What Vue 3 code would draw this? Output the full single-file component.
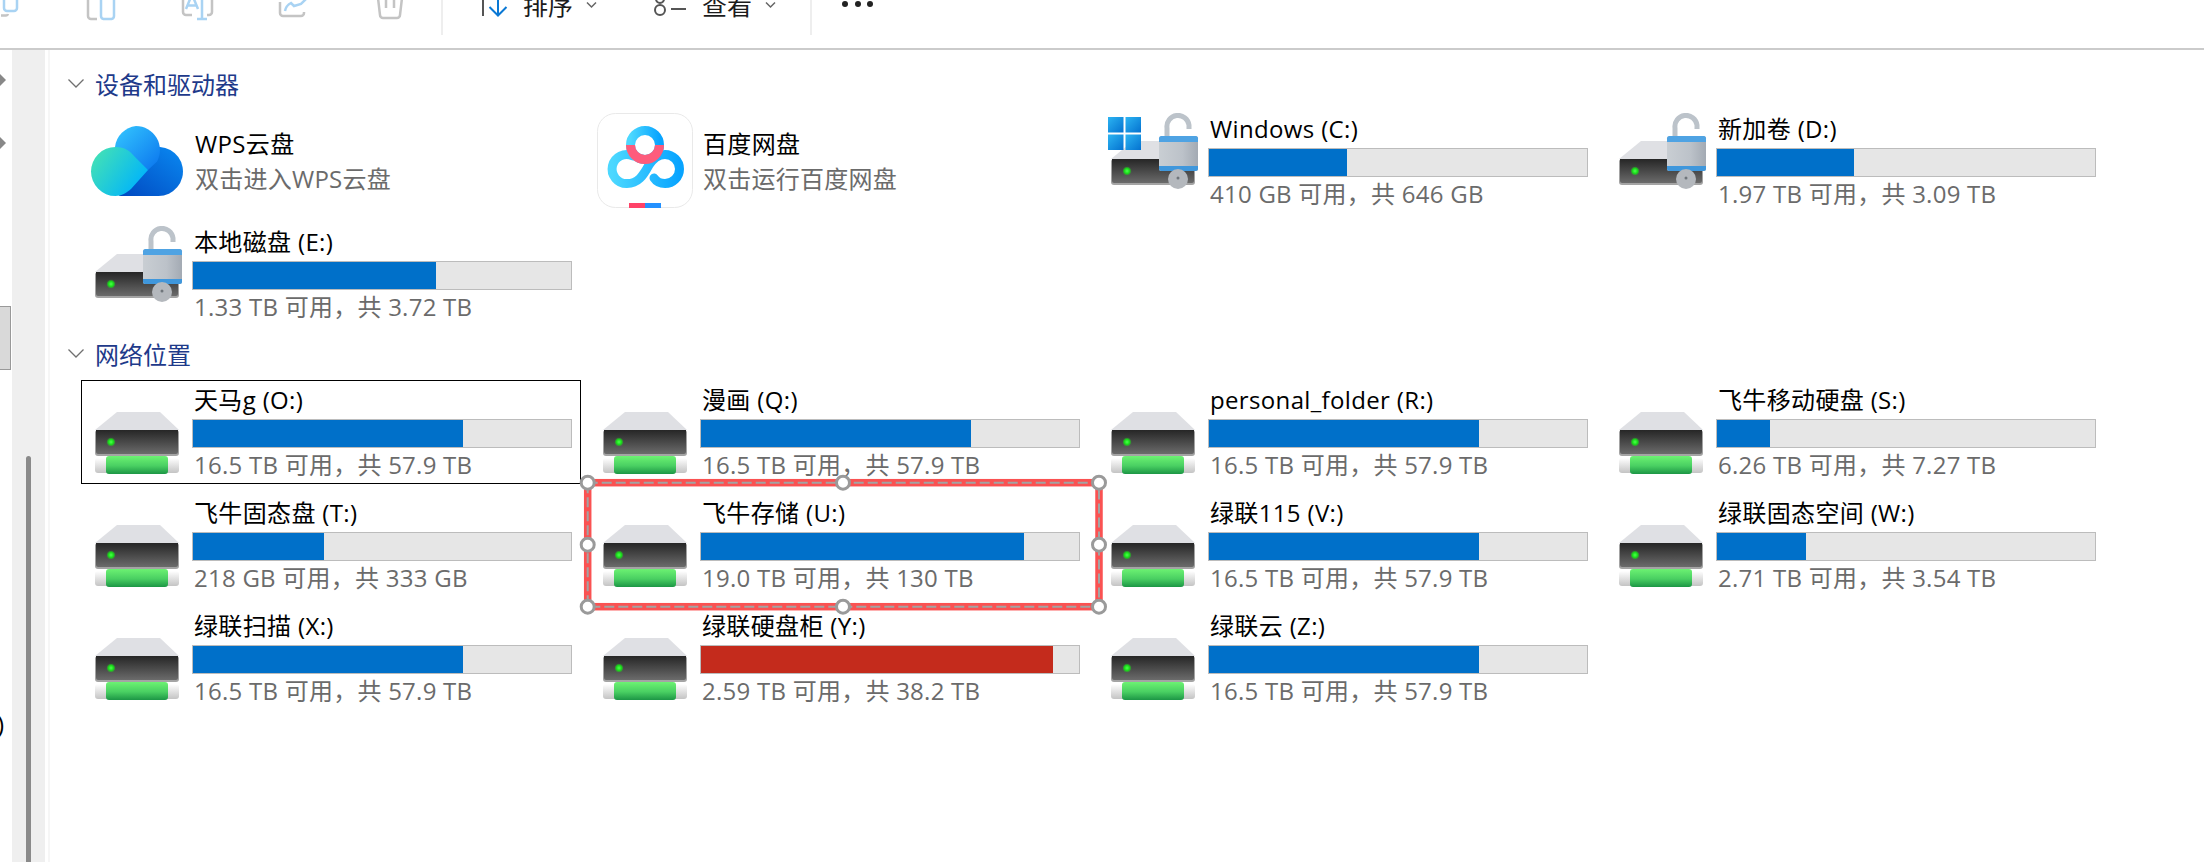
<script setup>
const pct = (free, total) => `${(1 - free / total) * 100}%`

const apps = [
  { name: 'WPS云盘', hint: '双击进入WPS云盘', icon: 'wps' },
  { name: '百度网盘', hint: '双击运行百度网盘', icon: 'baidu' },
]

const localDrives = [
  { name: 'Windows (C:)', usage: '410 GB 可用，共 646 GB', fill: pct(410, 646), win: true },
  { name: '新加卷 (D:)', usage: '1.97 TB 可用，共 3.09 TB', fill: pct(1.97, 3.09) },
  { name: '本地磁盘 (E:)', usage: '1.33 TB 可用，共 3.72 TB', fill: pct(1.33, 3.72) },
]

const netDrives = [
  { name: '天马g (O:)', usage: '16.5 TB 可用，共 57.9 TB', fill: pct(16.5, 57.9), selected: true },
  { name: '漫画 (Q:)', usage: '16.5 TB 可用，共 57.9 TB', fill: pct(16.5, 57.9) },
  { name: 'personal_folder (R:)', usage: '16.5 TB 可用，共 57.9 TB', fill: pct(16.5, 57.9) },
  { name: '飞牛移动硬盘 (S:)', usage: '6.26 TB 可用，共 7.27 TB', fill: pct(6.26, 7.27) },
  { name: '飞牛固态盘 (T:)', usage: '218 GB 可用，共 333 GB', fill: pct(218, 333) },
  { name: '飞牛存储 (U:)', usage: '19.0 TB 可用，共 130 TB', fill: pct(19, 130), marked: true },
  { name: '绿联115 (V:)', usage: '16.5 TB 可用，共 57.9 TB', fill: pct(16.5, 57.9) },
  { name: '绿联固态空间 (W:)', usage: '2.71 TB 可用，共 3.54 TB', fill: pct(2.71, 3.54) },
  { name: '绿联扫描 (X:)', usage: '16.5 TB 可用，共 57.9 TB', fill: pct(16.5, 57.9) },
  { name: '绿联硬盘柜 (Y:)', usage: '2.59 TB 可用，共 38.2 TB', fill: pct(2.59, 38.2), low: true },
  { name: '绿联云 (Z:)', usage: '16.5 TB 可用，共 57.9 TB', fill: pct(16.5, 57.9) },
]

const handles = [
  [10.7, 10.7], [266, 10.7], [522, 10.7],
  [10.7, 72.7], [522, 72.7],
  [10.7, 134.7], [266, 134.7], [522, 134.7],
]
</script>

<template>
  <div class="explorer">
    <svg class="sprites" width="0" height="0" aria-hidden="true">
      <defs>
        <linearGradient id="g-box" x1="0" y1="0" x2="0" y2="1">
          <stop offset="0" stop-color="#262626" />
          <stop offset="1" stop-color="#6b6b6b" />
        </linearGradient>
        <linearGradient id="g-plug" x1="0" y1="0" x2="0" y2="1">
          <stop offset="0" stop-color="#ffffff" />
          <stop offset="1" stop-color="#c4c4c4" />
        </linearGradient>
        <linearGradient id="g-cable" x1="0" y1="0" x2="0" y2="1">
          <stop offset="0" stop-color="#6cf272" />
          <stop offset="0.55" stop-color="#49cf62" />
          <stop offset="1" stop-color="#1c9645" />
        </linearGradient>
        <linearGradient id="g-lock" x1="0" y1="0" x2="1" y2="0">
          <stop offset="0" stop-color="#c9ced3" />
          <stop offset="0.6" stop-color="#bcc2c9" />
          <stop offset="1" stop-color="#a3aab3" />
        </linearGradient>
        <linearGradient id="g-win" x1="0" y1="0" x2="1" y2="1">
          <stop offset="0" stop-color="#2cb4f2" />
          <stop offset="1" stop-color="#0472d0" />
        </linearGradient>
        <linearGradient id="g-wps-top" x1="0" y1="0" x2="1" y2="1">
          <stop offset="0" stop-color="#35c8ff" />
          <stop offset="1" stop-color="#0a74ee" />
        </linearGradient>
        <linearGradient id="g-wps-back" x1="0" y1="1" x2="1" y2="0">
          <stop offset="0" stop-color="#0048c0" />
          <stop offset="1" stop-color="#0a8af2" />
        </linearGradient>
        <linearGradient id="g-wps-front" x1="0" y1="0" x2="1" y2="0.6">
          <stop offset="0" stop-color="#4ae6ae" />
          <stop offset="1" stop-color="#00b4fb" />
        </linearGradient>
        <linearGradient id="g-bd" x1="0" y1="0" x2="1" y2="0">
          <stop offset="0" stop-color="#4cd8ff" />
          <stop offset="1" stop-color="#08a4ff" />
        </linearGradient>
        <radialGradient id="g-led">
          <stop offset="0" stop-color="#4dff4d" />
          <stop offset="0.55" stop-color="#19e019" />
          <stop offset="1" stop-color="#19e019" stop-opacity="0.1" />
        </radialGradient>

        <symbol id="drive-body" viewBox="0 0 96 96">
          <path d="M28 28h43l19 18H6z" fill="#dfe0e4" />
          <path d="M6 48a3 3 0 0 1 2-2h80a3 3 0 0 1 2 2v21a3 3 0 0 1-3 3H9a3 3 0 0 1-3-3z" fill="#a4a4a4" />
          <path d="M7 46h82v22a2 2 0 0 1-2 2H9a2 2 0 0 1-2-2z" fill="url(#g-box)" />
          <circle cx="22" cy="58" r="4.5" fill="url(#g-led)" />
        </symbol>

        <symbol id="drive-net" viewBox="0 0 96 96">
          <use href="#drive-body" width="96" height="96" />
          <rect x="6" y="74" width="84" height="15" rx="3" fill="url(#g-plug)" />
          <rect x="17" y="72" width="62" height="18" rx="3" fill="url(#g-cable)" />
        </symbol>

        <symbol id="drive-lock" viewBox="0 0 96 96">
          <use href="#drive-body" width="96" height="96" />
          <path d="M62 26V15a11 11 0 0 1 22-3v4" fill="none" stroke="#bcc3ca" stroke-width="5" />
          <rect x="54" y="23" width="39" height="35" rx="2.5" fill="url(#g-lock)" />
          <path d="M54 29v-3.5a2.500 2.500 0 0 1 2.500-2.500h34a2.500 2.500 0 0 1 2.500 2.500V29z" fill="#4fa3e3" />
          <path d="M54 53h39v2.500a2.500 2.500 0 0 1-2.500 2.500h-34a2.500 2.500 0 0 1-2.500-2.500z" fill="#3f97dc" />
          <circle cx="73" cy="66" r="10" fill="#b4b8bd" />
          <circle cx="73" cy="65" r="1.500" fill="#6f757b" />
        </symbol>

        <symbol id="win-flag" viewBox="0 0 34 34">
          <rect x="0" y="0" width="15.500" height="15.500" fill="url(#g-win)" />
          <rect x="17.500" y="0" width="15.500" height="15.500" fill="url(#g-win)" />
          <rect x="0" y="17.500" width="15.500" height="15.500" fill="url(#g-win)" />
          <rect x="17.500" y="17.500" width="15.500" height="15.500" fill="url(#g-win)" />
        </symbol>

        <symbol id="wps" viewBox="0 0 96 96">
          <path d="M30 83h39.500a24.500 24.500 0 1 0-9-47.300L40 60z" fill="url(#g-wps-back)" />
          <path d="M47 13a24 24 0 0 1 21 35.500L59 57 40 48 26 34A24 24 0 0 1 47 13z" fill="url(#g-wps-top)" />
          <path d="M26.500 34C36 34 41 38 45 43l14 14-17 19c-5 4-9 7-15.500 7a24.500 24.500 0 0 1 0-49z" fill="url(#g-wps-front)" />
        </symbol>

        <symbol id="baidu" viewBox="0 0 96 96">
          <rect x="0.500" y="0.500" width="95" height="94" rx="18" fill="#fff" stroke="#e9e9e9" />
          <path d="M36 43A14.500 14.500 0 1 0 30 70.500C41 70.500 46 63 52 52c4-6 9-10.500 16-10.500a14.500 14.500 0 0 1 0 29c-5 0-9-2.500-11-5.500" fill="none" stroke="url(#g-bd)" stroke-width="9" stroke-linecap="round" />
          <circle cx="48" cy="32" r="14.500" fill="none" stroke="url(#g-bd)" stroke-width="9" />
          <path d="M33.500 32a14.500 14.500 0 0 0 29 0" fill="none" stroke="#fd5c7c" stroke-width="9" />
          <rect x="32" y="90" width="16" height="5" fill="#ff4268" />
          <rect x="48" y="90" width="16" height="5" fill="#2391ff" />
        </symbol>
      </defs>
    </svg>

    <header class="toolbar">
      <svg class="tool tool-a" width="18" height="19" viewBox="0 0 18 19">
        <path d="M1 15.500h5a2 2 0 0 0 2-1.500" class="ink-off" />
        <path d="M4 -4v12a3 3 0 0 0 3 3h7a3 3 0 0 0 3-3V-4" class="ink-blue" />
      </svg>
      <svg class="tool tool-b" width="28" height="20" viewBox="0 0 28 20">
        <path d="M1 -2v18a3 3 0 0 0 3 3h6" class="ink-off" />
        <path d="M14 -2v18a3 3 0 0 0 2.500 3h8a3 3 0 0 0 2.500-3V-2" class="ink-blue" />
      </svg>
      <svg class="tool tool-c" width="31" height="20" viewBox="0 0 31 20">
        <path d="M1 -2v14a3 3 0 0 0 3 3h6M25 15h2a3 3 0 0 0 3-3V-2" class="ink-off" />
        <path d="M4 9 8.500 -2 M16 9 11.500 -2M6 5.500h8M20 -2v21M15 19h10" class="ink-blue" />
      </svg>
      <svg class="tool tool-d" width="30" height="18" viewBox="0 0 30 18">
        <path d="M1 2v11a3 3 0 0 0 3 3h18a3 3 0 0 0 3-3v-1" class="ink-off" />
        <path d="M6 11c1-5 4-7 6-8l3 3 7-2 7-7M29 -3" class="ink-blue" />
      </svg>
      <svg class="tool tool-e" width="26" height="20" viewBox="0 0 26 20">
        <path d="M1 -2 3 15a3 3 0 0 0 3 3h14a3 3 0 0 0 3-3l2-17M9 -2v10M17 -2v10" class="ink-off" />
      </svg>

      <span class="tool-sep sep-first"></span>

      <svg class="tool tool-sort" width="32" height="17" viewBox="0 0 32 17">
        <path d="M8 -2v18" fill="none" stroke="#555" stroke-width="2" />
        <path d="M23 -2v17M14.500 7l8.500 8.500L31.500 7" fill="none" stroke="#0a78d4" stroke-width="2" />
      </svg>
      <span class="tool-label label-sort">排序</span>
      <svg class="tool-chev" width="11" height="8" viewBox="0 0 11 8"><path d="M1 1.500l4.500 4.500L10 1.500" /></svg>

      <svg class="tool tool-view" width="33" height="17" viewBox="0 0 33 17">
        <circle cx="7" cy="10" r="5" fill="none" stroke="#555" stroke-width="2" />
        <circle cx="7" cy="-1" r="4" fill="none" stroke="#555" stroke-width="2" />
        <path d="M18 9h15" stroke="#555" stroke-width="2" />
      </svg>
      <span class="tool-label label-view">查看</span>
      <svg class="tool-chev" width="11" height="8" viewBox="0 0 11 8"><path d="M1 1.500l4.500 4.500L10 1.500" /></svg>

      <span class="tool-sep sep-second"></span>

      <span class="dots"><i></i><i></i><i></i></span>
    </header>

    <div class="body">
      <nav class="nav">
        <svg class="nav-arrow arrow-one" width="6" height="12" viewBox="0 0 6 12"><path d="M0 0l6 6-6 6z" /></svg>
        <svg class="nav-arrow arrow-two" width="6" height="12" viewBox="0 0 6 12"><path d="M0 0l6 6-6 6z" /></svg>
        <div class="nav-current"></div>
        <div class="nav-clip">)</div>
      </nav>
      <div class="nav-scroll"><div class="nav-thumb"></div></div>

      <main class="main">
        <h2 class="group first">
          <svg width="16" height="9" viewBox="0 0 16 9"><path d="M.5.500 8 8 15.500.500" /></svg>
          设备和驱动器
        </h2>
        <section class="grid">
          <div v-for="app in apps" :key="app.name" class="tile">
            <svg class="tile-icon" width="96" height="96"><use :href="`#${app.icon}`" width="96" height="96" /></svg>
            <div class="app-text">
              <div class="name">{{ app.name }}</div>
              <div class="usage">{{ app.hint }}</div>
            </div>
          </div>
          <div v-for="d in localDrives" :key="d.name" class="tile">
            <span class="tile-icon">
              <svg width="96" height="96"><use href="#drive-lock" width="96" height="96" /></svg>
              <svg v-if="d.win" class="flag" width="34" height="34"><use href="#win-flag" width="34" height="34" /></svg>
            </span>
            <div class="info">
              <div class="name">{{ d.name }}</div>
              <div class="bar"><div class="bar-fill" :style="{ width: d.fill }"></div></div>
              <div class="usage">{{ d.usage }}</div>
            </div>
          </div>
        </section>

        <h2 class="group second">
          <svg width="16" height="9" viewBox="0 0 16 9"><path d="M.5.500 8 8 15.500.500" /></svg>
          网络位置
        </h2>
        <section class="grid">
          <div
            v-for="d in netDrives"
            :key="d.name"
            class="tile"
            :class="{ selected: d.selected, marked: d.marked }"
          >
            <svg class="tile-icon" width="96" height="96"><use href="#drive-net" width="96" height="96" /></svg>
            <div class="info">
              <div class="name">{{ d.name }}</div>
              <div class="bar"><div class="bar-fill" :class="{ low: d.low }" :style="{ width: d.fill }"></div></div>
              <div class="usage">{{ d.usage }}</div>
            </div>
            <svg v-if="d.marked" class="annotation" width="533" height="146" viewBox="0 0 533 146">
              <rect x="10.700" y="10.700" width="511.300" height="124" fill="none" stroke="#fa5252" stroke-width="7.500" />
              <rect x="10.700" y="10.700" width="511.300" height="124" fill="none" stroke="#a3a3a3" stroke-width="2" stroke-dasharray="10 4" />
              <circle v-for="(h, i) in handles" :key="i" :cx="h[0]" :cy="h[1]" r="6.500" fill="#fff" stroke="#9a9a9a" stroke-width="3" />
            </svg>
          </div>
        </section>
      </main>
    </div>
  </div>
</template>

<style>
html, body {
  margin: 0;
  background: #fff;
  overflow: hidden;
}
</style>

<style scoped>
.explorer {
  width: 2204px;
  height: 862px;
  overflow: hidden;
  background: #fff;
  font-family: "Open Sans", "Noto Sans CJK SC", sans-serif;
  font-size: 24px;
  color: #000;
}

.sprites {
  position: absolute;
}

.toolbar {
  display: flex;
  align-items: flex-start;
  height: 48px;
  border-bottom: 2px solid #cbcbcb;
  overflow: hidden;
}

.tool {
  flex: none;
  overflow: visible;
}

.ink-off,
.ink-blue {
  fill: none;
  stroke-width: 2.500;
}
.ink-off { stroke: #c4c4c4; }
.ink-blue { stroke: #a9d3f3; }

.tool-a { margin-left: 0; }
.tool-b { margin-left: 69px; }
.tool-c { margin-left: 67px; }
.tool-d { margin-left: 66px; }
.tool-e { margin-left: 68px; }

.tool-sep {
  flex: none;
  width: 2px;
  height: 35px;
  background: #eeeeee;
}
.sep-first { margin-left: 38px; }
.sep-second { margin-left: 34px; }

.tool-sort { margin-left: 32px; }
.tool-view { margin-left: 56px; }

.tool-label {
  flex: none;
  margin-top: -12px;
  line-height: 34px;
  font-size: 25px;
  color: #1c1c1c;
}
.label-sort { margin-left: 16px; }
.label-view { margin-left: 16px; }

.tool-chev {
  flex: none;
  margin-left: 13px;
  margin-top: 1px;
  fill: none;
  stroke: #666;
  stroke-width: 1.500;
}

.dots {
  display: flex;
  gap: 6.500px;
  margin-left: 30px;
  margin-top: 1px;
}
.dots i {
  display: block;
  width: 6px;
  height: 6px;
  border-radius: 50%;
  background: #222;
}

.body {
  display: flex;
  height: 812px;
}

.nav {
  flex: none;
  width: 12px;
  overflow: hidden;
}

.nav-arrow {
  display: block;
  fill: #888;
}
.arrow-one { margin-top: 24px; }
.arrow-two { margin-top: 51px; }

.nav-current {
  width: 10px;
  height: 62px;
  margin-top: 157px;
  background: #d9d9d9;
  border: 1px solid #999;
  border-left: 0;
}

.nav-clip {
  margin-top: 339px;
  margin-left: -3px;
  line-height: 30px;
  font-size: 24px;
}

.nav-scroll {
  flex: none;
  width: 33px;
  background: #efefef;
  overflow: hidden;
}
.nav-thumb {
  width: 5px;
  height: 420px;
  margin: 406px 0 0 14px;
  border-radius: 3px;
  background: #8a8a8a;
}

.main {
  flex: 1;
  min-width: 0;
  margin-left: 3px;
  padding-left: 31px;
  border-left: 2px solid #f6f6f6;
}

.group {
  display: flex;
  align-items: center;
  gap: 11px;
  height: 34px;
  margin-left: -13px;
  font-size: 24px;
  font-weight: 400;
  color: #1e3a8a;
}
.group svg {
  fill: none;
  stroke: #707070;
  stroke-width: 1.300;
}
.group.first { margin-top: 16px; margin-bottom: 9px; }
.group.second { margin-top: 10px; margin-bottom: 10px; }

.grid {
  display: grid;
  grid-template-columns: repeat(4, 500px);
  grid-auto-rows: 104px;
  gap: 9px 8px;
}

.tile {
  position: relative;
  display: flex;
  box-sizing: border-box;
  padding: 4px 9px 0 8px;
}
.tile.selected {
  outline: 1px solid #000;
  outline-offset: -1px;
}

.tile-icon {
  position: relative;
  display: block;
  flex: none;
  width: 96px;
  height: 96px;
}

.flag {
  position: absolute;
  left: 3px;
  top: 4px;
}

.info {
  flex: 1;
  min-width: 0;
  margin-left: 7px;
}

.app-text {
  margin-left: 10px;
  padding-top: 15px;
}
.app-text .name,
.app-text .usage {
  padding-left: 0;
}
.app-text .usage {
  margin-top: 1px;
}

.name,
.usage {
  height: 34px;
  padding-left: 2px;
  white-space: nowrap;
}
.name {
  line-height: 32px;
  font-size: 24px;
  letter-spacing: 0.35px;
}
.usage {
  line-height: 31px;
  color: #6b6b6b;
  font-size: 24px;
  letter-spacing: 0.25px;
}

.bar {
  box-sizing: border-box;
  height: 29px;
  margin: 1px 0;
  background: #e6e6e6;
  border: 1px solid #bcbcbc;
}
.bar-fill {
  height: 100%;
  background: #0070c9;
}
.bar-fill.low {
  background: #c42b1c;
}

.annotation {
  position: absolute;
  left: -12px;
  top: -21px;
  pointer-events: none;
}
</style>
